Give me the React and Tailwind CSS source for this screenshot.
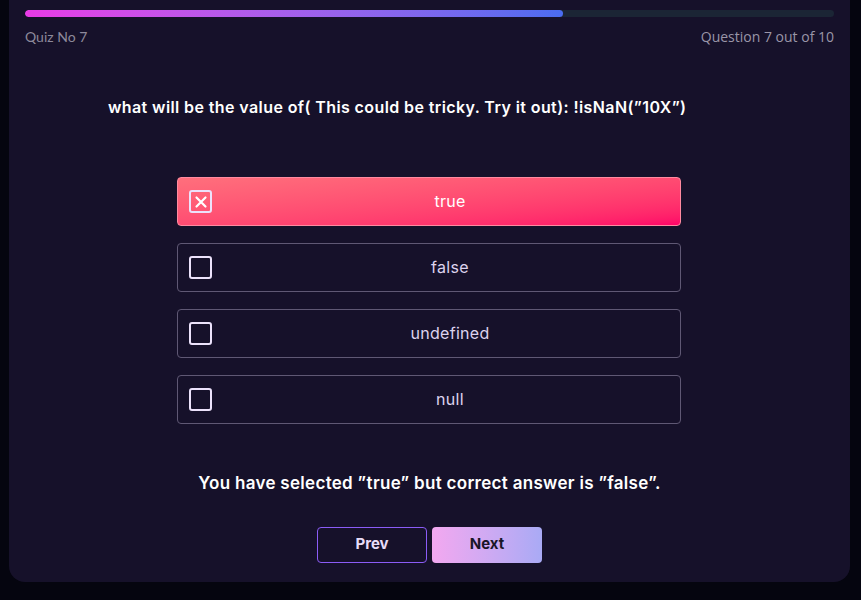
import React from "react";

const options = ["true", "false", "undefined", "null"];

function Box({ checked }) {
  return (
    <div className="w-[23px] h-[23px] rounded-[3px] border-2 border-[#ece2fb] flex items-center justify-center shrink-0">
      {checked && (
        <svg width="14" height="14" viewBox="0 0 14 14">
          <path d="M2.5 2.5 L11.5 11.5 M11.5 2.5 L2.5 11.5" stroke="#fff" strokeWidth="2.2" strokeLinecap="round" />
        </svg>
      )}
    </div>
  );
}

export default function App() {
  const selected = 0;
  const progress = 66.5;

  return (
    <div className="h-[600px] w-[861px] bg-[#05050f] pl-[9px] pr-[11px]" style={{ fontFamily: "Inter, 'DejaVu Sans', sans-serif" }}>
      <div className="h-[582px] bg-[#16112a] rounded-b-[16px] px-[16px] pt-[10px] flex flex-col">
        {/* progress */}
        <div className="h-[7px] rounded-full bg-[#1b2535] overflow-hidden">
          <div
            className="h-full rounded-full bg-gradient-to-r from-[#e93ae6] to-[#4a6cf0]"
            style={{ width: `${progress}%` }}
          />
        </div>
        <div className="flex justify-between items-center mt-[9px] text-[14px] text-[#8d899b]">
          <span style={{ fontFamily: "Lato, sans-serif" }}>Quiz No 7</span>
          <span style={{ fontFamily: "'Open Sans', sans-serif" }} className="text-[14px] text-[#9a96a8]">Question 7 out of 10</span>
        </div>

        <p className="mt-[48px] pl-[83px] text-[16px] font-semibold text-white tracking-[0.4px]">
          what will be the value of( This could be tricky. Try it out): !isNaN(”10X”)
        </p>

        <div className="mt-[58px] ml-[152px] w-[504px] flex flex-col gap-[17px]">
          {options.map((o, i) => (
            <div
              key={o}
              className={`h-[49px] rounded-[4px] flex items-center pl-[11px] ${
                i === selected
                  ? "bg-gradient-to-br from-[#ff6f7c] to-[#ff0068] border border-[#ff8aa0]"
                  : "border border-[#5f5874]"
              }`}
            >
              <Box checked={i === selected} />
              <span className={`flex-1 pl-[8px] pb-[1px] text-center text-[16px] tracking-[0.3px] ${i === selected ? "text-white" : "text-[#ddd3ee]"}`}>
                {o}
              </span>
            </div>
          ))}
        </div>

        <p className="mt-[47px] text-center text-[17px] font-semibold text-white tracking-[0.3px]">
          You have selected ”true” but correct answer is ”false”.
        </p>

        <div className="mt-[30px] flex justify-center gap-[5px]">
          <button className="w-[110px] h-[36px] rounded-[4px] border border-[#8b5cf6] text-[#e8dcf8] text-[15px] font-bold">
            Prev
          </button>
          <button className="w-[110px] h-[36px] rounded-[4px] bg-gradient-to-r from-[#f3a8f0] to-[#a9aaf5] text-[#1a1628] text-[15px] font-bold">
            Next
          </button>
        </div>
      </div>
    </div>
  );
}
